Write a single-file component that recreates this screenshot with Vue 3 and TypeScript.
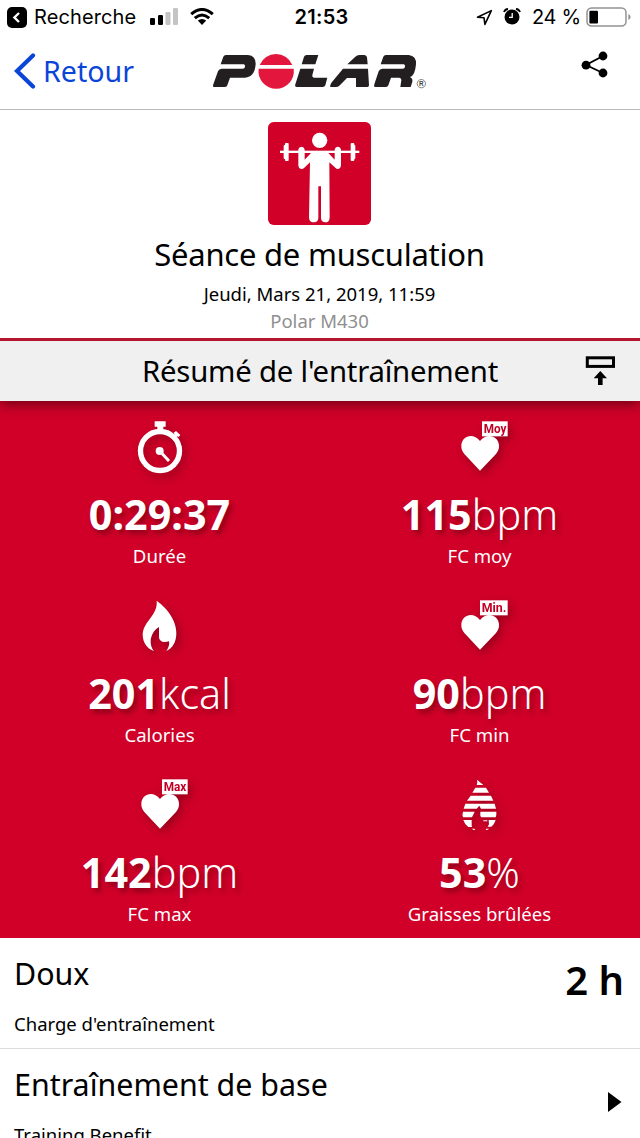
<script setup lang="ts">
type IconKind = 'watch' | 'heart' | 'flame' | 'fat'

interface Metric {
  icon: IconKind
  badge?: string
  badgeX?: number
  badgeWidth?: number
  value: string
  unit: string
  label: string
}

const metrics: Metric[] = [
  { icon: 'watch', value: '0:29:37', unit: '', label: 'Durée' },
  { icon: 'heart', badge: 'Moy', badgeX: 276, badgeWidth: 77, value: '115', unit: 'bpm', label: 'FC moy' },
  { icon: 'flame', value: '201', unit: 'kcal', label: 'Calories' },
  { icon: 'heart', badge: 'Min.', badgeX: 270, badgeWidth: 83, value: '90', unit: 'bpm', label: 'FC min' },
  { icon: 'heart', badge: 'Max', badgeX: 276, badgeWidth: 77, value: '142', unit: 'bpm', label: 'FC max' },
  { icon: 'fat', value: '53', unit: '%', label: 'Graisses brûlées' },
]
</script>

<template>
  <main class="screen">
    <div class="status">
      <div class="status-left">
        <svg class="app-back" width="20" height="21" viewBox="0 0 20 21">
          <rect width="20" height="21" rx="5" />
          <path d="M12 6L7.4 10.5L12 15" fill="none" stroke="#fff" stroke-width="2.4" />
        </svg>
        <span class="search">Recherche</span>
        <svg class="signal" width="28" height="17" viewBox="0 0 28 17">
          <rect y="10" width="5" height="7" rx="1.2" />
          <rect x="8" y="7" width="5" height="10" rx="1.2" />
          <rect x="15.5" y="4" width="5" height="13" rx="1.2" fill="#c4c4c4" />
          <rect x="23" y="0" width="5" height="17" rx="1.2" fill="#c4c4c4" />
        </svg>
        <svg class="wifi" width="24" height="18" viewBox="0 0 24 18">
          <path d="M1.2 6.2Q12 -3.2 22.8 6.2M4.8 10.2Q12 3.8 19.2 10.2" fill="none" stroke="#000" stroke-width="3" />
          <path d="M7.8 12.6Q12 9.2 16.2 12.6L12 17Z" />
        </svg>
      </div>
      <span class="clock">21:53</span>
      <div class="status-right">
        <svg class="arrow" width="17" height="17" viewBox="0 0 17 17">
          <path d="M1.5 8.2L15.3 1.6L8.9 15.4L8 8.7Z" fill="none" stroke="#000" stroke-width="1.6" stroke-linejoin="round" />
        </svg>
        <svg class="alarm" width="18" height="17" viewBox="0 0 18 17">
          <circle cx="9" cy="9" r="7.5" />
          <path d="M1 4Q2 1.3 5 1M17 4Q16 1.3 13 1" fill="none" stroke="#000" stroke-width="1.8" />
          <path d="M9.2 5V9.4H6" fill="none" stroke="#fff" stroke-width="1.3" />
        </svg>
        <span class="percent">24 %</span>
        <svg class="battery" width="46" height="20" viewBox="0 0 46 20">
          <rect x="1" y="1" width="39" height="18" rx="4.5" fill="none" stroke="#929292" stroke-width="1.5" />
          <rect x="3.4" y="3.7" width="8.6" height="12.8" rx="1" />
          <path d="M42.4 7Q44.6 8 44.6 10T42.4 13Z" fill="#929292" />
        </svg>
      </div>
    </div>

    <header class="nav">
      <div class="back">
        <svg width="22" height="38" viewBox="14 52 22 38">
          <path d="M33 55.5L17 71L33 86.5" fill="none" stroke="#0a45d8" stroke-width="4.2" stroke-linecap="round" />
        </svg>
        <span>Retour</span>
      </div>
      <svg class="logo" width="215" height="38" viewBox="36 36 645 114">
        <g fill="#231f20">
          <path d="M62 73L70 50Q72 45 78 45H144Q168 47 167 73Q164 112 135 113H90L82 136Q80 141 75 141H40Q38 140 40 133L54 94Q57 86 65 86H128Q134 86 135 80Q136 75 132 73Z" />
          <path d="M305 73L312 50Q314 45 320 45H355L346 73Z" />
          <path d="M301 86H342L337 105Q336 113 343 113H382L376 136Q374 141 368 141H291Q283 141 286 133Z" />
          <path d="M442 73L466 50Q471 45 478 45H493Q500 46 501 52L503 73Z" />
          <path d="M429 86H504L507 136Q507 141 502 141H468V114H441L418 137Q414 141 408 141H391Q389 136 396 126Z" />
          <path d="M542 73L550 50Q552 45 558 45H626Q650 48 648 73Q645 108 630 111Q639 116 637 125L632 141H601L604 121Q604 113 597 113H573L565 136Q563 141 558 141H524Q521 139 523 133L536 94Q539 86 547 86H608Q614 86 615 80Q616 75 612 73Z" />
        </g>
        <path d="M179 75A53 53 0 0 1 277 75Z" fill="#e3173e" />
        <path d="M176 86H281A53 53 0 1 1 176 86Z" fill="#e3173e" />
        <circle cx="664" cy="131" r="12.5" fill="none" stroke="#444" stroke-width="2" />
        <text class="reg" x="664" y="138" text-anchor="middle">R</text>
      </svg>
      <svg class="share" width="30" height="30" viewBox="580 50 30 30">
        <path d="M603 56L586 65L603 73" fill="none" stroke="#000" stroke-width="1.9" />
        <circle cx="603" cy="56" r="4.4" />
        <circle cx="586" cy="65.2" r="4.4" />
        <circle cx="603" cy="73" r="4.4" />
      </svg>
    </header>

    <section class="hero">
      <svg class="sport" width="103" height="103" viewBox="54 36 309 309">
        <rect x="54" y="36" width="309" height="309" rx="17" fill="#d00028" />
        <g fill="#fff">
          <circle cx="209" cy="91" r="23" />
          <rect x="90" y="122" width="238" height="7" />
          <rect x="105" y="99" width="11" height="54" rx="3" />
          <rect x="101" y="105" width="7" height="42" rx="3" />
          <rect x="302" y="99" width="11" height="54" rx="3" />
          <rect x="309" y="105" width="7" height="42" rx="3" />
          <path d="M145 118Q147 110 154 110Q162 110 164 119V149L183 129H235L254 149V119Q256 110 264 110Q271 110 273 118V165Q272 177 263 177Q260 177 256 173L238 157L239 323Q238 337 226 337Q214 337 213 324V229H205V324Q204 337 192 337Q178 337 177 323L180 157L163 173Q159 177 155 177Q146 177 145 165Z" />
        </g>
      </svg>
      <h1>Séance de musculation</h1>
      <p class="date">Jeudi, Mars 21, 2019, 11:59</p>
      <p class="device">Polar M430</p>
    </section>

    <div class="summary">
      <h2>Résumé de l'entraînement</h2>
      <svg class="collapse" width="30" height="31" viewBox="585 355 30 31">
        <rect x="587.3" y="357.8" width="26.2" height="8.6" fill="none" stroke="#000" stroke-width="3" />
        <path d="M600.3 371L607 378.3H602.6V385H598V378.3H593.7Z" />
      </svg>
    </div>

    <section class="metrics">
      <div v-for="m in metrics" :key="m.label" class="metric">
        <svg class="metric-icon" width="64" height="64" viewBox="174 21 192 192">
          <template v-if="m.icon === 'watch'">
            <circle cx="270" cy="123" r="58.5" fill="none" stroke="#fff" stroke-width="16" />
            <path d="M254 34H287V50H280V66H262V50H254Z" fill="#fff" />
            <path d="M304 80L314 73L311 68L318 63L331 75L326 81L322 79L314 90Z" fill="#fff" />
            <circle cx="269" cy="123" r="12" fill="#fff" />
            <path d="M269 123L297 153" stroke="#fff" stroke-width="9" />
          </template>
          <template v-else-if="m.icon === 'heart'">
            <path d="M270 182L223 132Q213 120 214 106C216 77 250 67 270 93C290 67 325 77 327 106Q328 120 318 132Z" fill="#fff" />
            <rect :x="m.badgeX" y="34" :width="m.badgeWidth" height="45" fill="#fff" />
            <text class="badge" :x="(m.badgeX ?? 0) + 5" y="70" :textLength="(m.badgeWidth ?? 0) - 9" lengthAdjust="spacingAndGlyphs">{{ m.badge }}</text>
          </template>
          <path v-else-if="m.icon === 'flame'" d="M260 35C284 52 319 88 319 132C319 160 308 177 289 186C296 177 299 166 297 157C281 162 266 158 267 141V114C255 121 246 133 243 147C240 162 244 177 252 186C232 181 218 161 218 136C219 110 239 94 251 73C259 59 261 48 260 35Z" fill="#fff" />
          <g v-else fill="#fff">
            <path d="M261 35L280 51H260Q263 44 261 35Z" />
            <path d="M256 59H288L297 74H247Z" />
            <path d="M242 83H303L310 98H231Z" />
            <path d="M226 107H314L318 122H273L268 113L260 122H221Z" />
            <path d="M219 131H254L246 148H219Q216 140 219 131ZM271 131H319Q320 140 317 148H274L271 144Z" />
            <path d="M220 156H245V173L246 177H235Q223 168 220 156ZM296 156H317Q314 168 304 176H293L297 169Z" />
            <path d="M244 182L252 186H256L253 182ZM289 182H298L291 186H287ZM280 157H292V160H280Z" />
          </g>
        </svg>
        <div class="value"><b>{{ m.value }}</b><span>{{ m.unit }}</span></div>
        <div class="label">{{ m.label }}</div>
      </div>
    </section>

    <section class="row">
      <div>
        <h3>Doux</h3>
        <p>Charge d'entraînement</p>
      </div>
      <strong>2 h</strong>
    </section>
    <section class="row">
      <div>
        <h3>Entraînement de base</h3>
        <p>Training Benefit</p>
      </div>
      <svg class="next" width="15" height="20" viewBox="0 0 15 20"><path d="M1 0L14.5 10L1 20Z" /></svg>
    </section>
  </main>
</template>

<style>
body {
  overflow: hidden;
}
</style>

<style scoped>
* {
  box-sizing: border-box;
}
h1, h2, h3, p {
  margin: 0;
  font-weight: 380;
}
svg {
  display: block;
  flex: none;
}
.screen {
  width: 640px;
  height: 1138px;
  overflow: hidden;
  background: #fff;
  color: #000;
  font-family: "Noto Sans", "Open Sans", sans-serif;
  white-space: nowrap;
}
.status {
  height: 35px;
  display: grid;
  grid-template-columns: 1fr 70px 1fr;
  font-family: Inter, "Liberation Sans", sans-serif;
  font-size: 20px;
  line-height: 35px;
}
.status-left {
  display: flex;
  padding-left: 7px;
}
.app-back {
  margin-top: 7px;
}
.search {
  width: 116px;
  margin-left: 7px;
  letter-spacing: 0.1px;
}
.signal {
  margin-top: 8px;
}
.wifi {
  margin: 8px 0 0 12px;
}
.clock {
  padding-left: 3px;
  text-align: center;
  font-weight: 600;
  letter-spacing: 0.3px;
}
.status-right {
  display: flex;
  justify-content: flex-end;
  padding-right: 8px;
}
.arrow {
  margin-top: 9px;
}
.alarm {
  margin: 8px 0 0 10px;
}
.percent {
  width: 54px;
  margin-left: 11px;
  letter-spacing: -0.3px;
}
.battery {
  margin: 7px 0 0 0;
}
.nav {
  height: 75px;
  display: grid;
  grid-template-columns: 212px 1fr 60px;
  border-bottom: 1px solid #b9b9b9;
}
.back {
  display: flex;
  padding: 17px 0 0 14px;
  color: #0a45d8;
  font-size: 28.6px;
  line-height: 38px;
}
.back span {
  margin-left: 7px;
}
.logo {
  margin-top: 17px;
}
.reg {
  font: 700 19px "Liberation Sans", sans-serif;
  fill: #444;
}
.share {
  margin-top: 15px;
}
.hero {
  height: 228px;
  padding: 12px 1px 0 0;
  display: flex;
  flex-direction: column;
  align-items: center;
}
h1 {
  margin-top: 8px;
  font-size: 31px;
  line-height: 43px;
  letter-spacing: -0.25px;
}
.date {
  margin-top: 4px;
  font-size: 18.5px;
  line-height: 28px;
}
.device {
  font-size: 18.5px;
  line-height: 26px;
  color: #8f8f8f;
}
.summary {
  position: relative;
  height: 63px;
  padding: 0 25px 0 142px;
  display: flex;
  justify-content: space-between;
  border-top: 3px solid #b5152f;
  background: #f0f0f0;
  box-shadow: 0 3px 12px rgba(0, 0, 0, 0.5);
  clip-path: inset(0 0 -20px 0);
}
h2 {
  font-size: 29.3px;
  line-height: 61px;
  letter-spacing: -0.2px;
}
.collapse {
  margin-top: 14px;
}
.metrics {
  height: 537px;
  display: grid;
  grid-template-columns: 1fr 1fr;
  grid-auto-rows: 179px;
  background: #d00028;
  color: #fff;
}
.metric {
  padding: 16px 1px 0 0;
  display: flex;
  flex-direction: column;
  align-items: center;
}
.metric-icon {
  position: relative;
  left: 0.5px;
  filter: drop-shadow(3px 4px 4px rgba(70, 0, 10, 0.4));
}
.badge {
  font: 700 38px Roboto, sans-serif;
  fill: #c20025;
}
.value {
  margin-top: 3px;
  font-size: 41.3px;
  line-height: 61px;
  font-weight: 330;
  text-shadow: 3px 4px 5px rgba(70, 0, 10, 0.45);
}
.value b {
  font-weight: 680;
}
.label {
  margin-top: -1px;
  font-size: 18.6px;
  font-weight: 380;
  line-height: 24px;
}
.row {
  height: 111px;
  padding: 0 16px 0 14px;
  display: flex;
  justify-content: space-between;
  border-bottom: 1px solid #ddd;
}
h3 {
  margin-top: 14px;
  font-size: 30.4px;
  line-height: 44px;
}
.row p {
  margin-top: 14px;
  font-size: 18.5px;
  line-height: 27px;
}
strong {
  font-size: 40px;
  line-height: 84px;
  font-weight: 580;
}
.next {
  margin: 43px 2px 0 0;
}
</style>
